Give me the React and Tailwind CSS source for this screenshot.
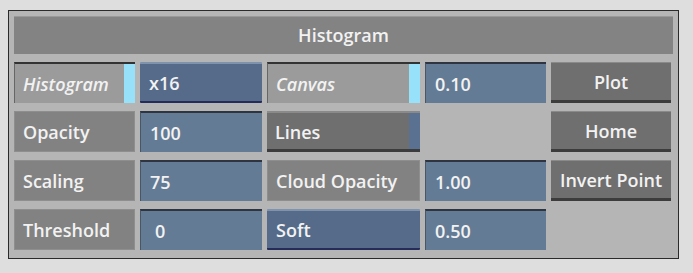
import React from 'react';

const font = { fontFamily: '"Open Sans", "DejaVu Sans", sans-serif' };

function Label({ children }) {
  return (
    <div className="h-full flex items-center pl-[8px] pt-[2px] bg-[#828282] border border-[#8e8e8e] text-[#f2f2f2] text-[18px] font-semibold">
      {children}
    </div>
  );
}

function Field({ children }) {
  return (
    <div className="h-full flex items-center pl-[9px] pt-[1px] bg-[#647b95] border-t-2 border-t-[#2e3540] border-l border-l-[#4a5565] text-[#f2f2f2] text-[18px] font-semibold">
      {children}
    </div>
  );
}

function BlueButton({ children }) {
  return (
    <div className="h-full flex items-center pl-[9px] pt-[1px] bg-[#556b89] border-t-2 border-t-[#7f93ad] border-b-2 border-b-[#262c5a] text-[#f2f2f2] text-[18px] font-semibold rounded-[1px]">
      {children}
    </div>
  );
}

function GrayButton({ children }) {
  return (
    <div className="h-full flex items-center justify-center pt-[2px] bg-[#6f6f6f] border-t border-t-[#8a8a8a] border-b-[3px] border-b-[#3c3c3c] text-[#f2f2f2] text-[18px] font-semibold">
      {children}
    </div>
  );
}

function Toggle({ children, on }) {
  return (
    <div className={`h-full flex items-stretch border-t-2 ${on ? 'border-t-[#333] bg-[#9b9b9b] border-l border-l-[#666]' : 'border-t-[#8a8a8a] bg-[#6f6f6f] border-b-[3px] border-b-[#3c3c3c]'}`}>
      <div className="flex-1 flex items-center pl-[8px] pt-[2px] text-[#f2f2f2] text-[18px] font-semibold italic">
        {on ? children : <span className="not-italic">{children}</span>}
      </div>
      <div className={`w-[11px] ${on ? 'bg-[#97e1fb]' : 'bg-[#5a7191]'}`} />
    </div>
  );
}

export default function App() {
  return (
    <div className="w-[693px] h-[273px] bg-[#dedede] pt-[10px] pl-[8px]" style={font}>
      <div className="w-[671px] h-[249px] bg-[#b5b5b5] border border-[#2a2a2a] pt-[5px] px-[5px]">
        <div className="h-[38px] bg-[#838383] border-t border-t-[#999] flex items-center justify-center text-[#f2f2f2] text-[18px] font-semibold">
          Histogram
        </div>
        <div className="mt-[8px] grid grid-cols-[121px_122px_153px_121px_120px] grid-rows-[41px_41px_41px_41px] gap-x-[5px] gap-y-[8px]">
          <Toggle on>Histogram</Toggle>
          <BlueButton>x16</BlueButton>
          <Toggle on>Canvas</Toggle>
          <Field>0.10</Field>
          <GrayButton>Plot</GrayButton>

          <Label>Opacity</Label>
          <Field>100</Field>
          <Toggle>Lines</Toggle>
          <div />
          <GrayButton>Home</GrayButton>

          <Label>Scaling</Label>
          <Field>75</Field>
          <Label>Cloud Opacity</Label>
          <Field>1.00</Field>
          <GrayButton>Invert Point</GrayButton>

          <Label>Threshold</Label>
          <Field><span className="pl-[5px]">0</span></Field>
          <BlueButton>Soft</BlueButton>
          <Field>0.50</Field>
          <div />
        </div>
      </div>
    </div>
  );
}
